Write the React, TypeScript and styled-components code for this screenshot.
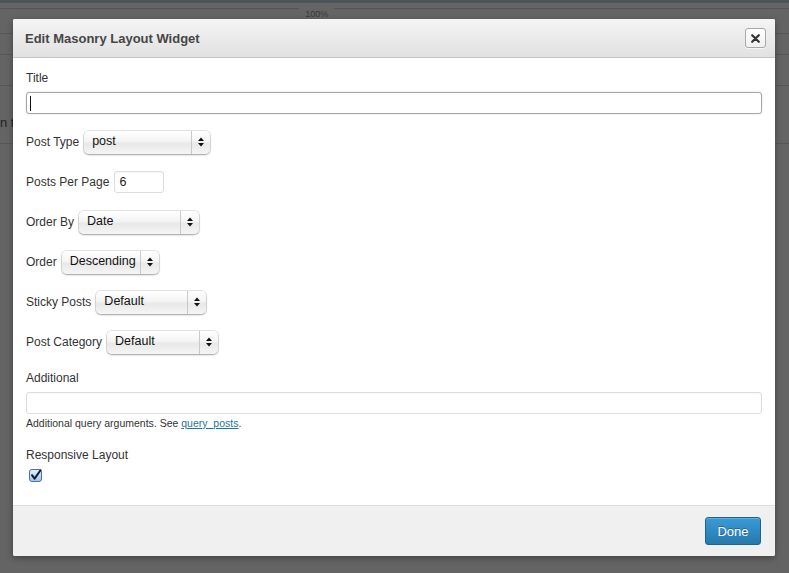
import React from "react";
import styled, { createGlobalStyle } from "styled-components";

const Global = createGlobalStyle`
  html, body { margin: 0; padding: 0; }
  body {
    width: 789px; height: 573px; overflow: hidden;
    background: #646464;
    font-family: "Liberation Sans", Arial, Helvetica, sans-serif;
  }
`;

/* ---------- backdrop (page behind overlay) ---------- */
const Backdrop = styled.div`
  position: relative;
  width: 789px;
  height: 573px;
  background: #646464;
  overflow: hidden;
`;
const TopStrip = styled.div`
  height: 3px;
  background: #4d5458;
`;
const Ruler = styled.div`
  height: 17px;
  display: flex;
  align-items: flex-start;
  gap: 6px;
`;
const RulerLine = styled.div<{ $grow?: number }>`
  flex: ${(p) => p.$grow ?? 1};
  margin-top: 5px;
  border-top: 1px solid #545454;
`;
const RulerLabel = styled.span`
  font-size: 9px;
  line-height: 12px;
  margin-top: 5px;
  color: #3a3a3a;
`;
const BgRow = styled.div<{ $h: number }>`
  height: ${(p) => p.$h}px;
  border-bottom: 1px solid #575757;
  box-sizing: border-box;
  font-size: 13px;
  color: #1f1f1f;
  padding-top: 29px;
  white-space: nowrap;
  &:empty { padding-top: 0; }
`;

/* ---------- modal ---------- */
const Modal = styled.div`
  position: absolute;
  left: 13px;
  top: 19px;
  width: 762px;
  height: 537px;
  background: #fff;
  border-radius: 2px;
  box-shadow: 0 2px 6px rgba(0, 0, 0, 0.35);
  display: flex;
  flex-direction: column;
  overflow: hidden;
`;
const Header = styled.div`
  height: 38px;
  flex: none;
  display: flex;
  align-items: center;
  justify-content: space-between;
  padding: 0 9px 0 12px;
  background: linear-gradient(to bottom, #f4f4f4, #e1e1e1);
  border-bottom: 1px solid #c6c6c6;
`;
const HeaderTitle = styled.h1`
  margin: 0;
  font-size: 13px;
  font-weight: bold;
  color: #464646;
`;
const CloseButton = styled.button`
  width: 21px;
  height: 20px;
  padding: 0;
  border: 1px solid #a9a9a9;
  border-radius: 3px;
  background: linear-gradient(to bottom, #ffffff, #f0f0f0);
  display: flex;
  align-items: center;
  justify-content: center;
  box-shadow: 0 1px 0 rgba(255, 255, 255, 0.6);
`;
const Body = styled.div`
  flex: 1;
  padding: 12px 13px 0 13px;
  display: flex;
  flex-direction: column;
`;
const Label = styled.div<{ $mt?: number }>`
  font-size: 12px;
  line-height: 16px;
  color: #333;
  margin-top: ${(p) => p.$mt ?? 0}px;
`;
const TextInput = styled.div<{ $focus?: boolean; $mt?: number }>`
  height: 22px;
  box-sizing: border-box;
  margin-top: ${(p) => p.$mt ?? 0}px;
  border: 1px solid ${(p) => (p.$focus ? "#a6a6a6" : "#dddddd")};
  border-radius: 3px;
  background: #fff;
  box-shadow: ${(p) => (p.$focus ? "0 0 2px rgba(30,140,190,0.25)" : "inset 0 1px 2px rgba(0,0,0,0.04)")};
  display: flex;
  align-items: center;
  padding-left: 3px;
  font-size: 12.5px;
  color: #222;
`;
const Caret = styled.span`
  width: 1px;
  height: 15px;
  background: #111;
`;
const Row = styled.div<{ $mt: number }>`
  display: flex;
  align-items: center;
  gap: 5px;
  height: 24px;
  margin-top: ${(p) => p.$mt}px;
`;
const SmallInput = styled(TextInput)`
  width: 50px;
  padding-left: 4px;
`;
const Select = styled.div<{ $w: number }>`
  width: ${(p) => p.$w}px;
  height: 23px;
  box-sizing: border-box;
  border-radius: 5px;
  background: linear-gradient(to bottom, #ffffff 0%, #f4f4f4 45%, #e8e8e8 55%, #f5f5f5 100%);
  box-shadow: 0 0 0 1px rgba(0, 0, 0, 0.1), 0 1px 2px rgba(0, 0, 0, 0.3);
  display: flex;
  align-items: stretch;
  font-size: 12.5px;
  color: #111;
`;
const SelectText = styled.span`
  flex: 1;
  display: flex;
  align-items: center;
  padding-left: 8px;
  padding-bottom: 2px;
`;
const SelectArrow = styled.span`
  width: 18px;
  flex: none;
  border-left: 1px solid #c9c9c9;
  display: flex;
  align-items: center;
  justify-content: center;
`;
const Help = styled.div`
  margin-top: 3px;
  font-size: 10.5px;
  line-height: 13px;
  color: #333;
`;
const HelpLink = styled.a`
  color: #21759b;
  text-decoration: underline;
`;
const CheckWrap = styled.div`
  margin-top: 5px;
  margin-left: 3px;
  width: 13px;
  height: 13px;
`;
const Footer = styled.div`
  height: 50px;
  flex: none;
  border-top: 1px solid #dcdcdc;
  background: #f0f0f0;
  display: flex;
  align-items: center;
  justify-content: flex-end;
  padding-right: 14px;
`;
const DoneButton = styled.button`
  width: 56px;
  height: 28px;
  box-sizing: border-box;
  border: 1px solid #1f6491;
  border-radius: 3px;
  background: linear-gradient(to bottom, #3a9bd6, #2679ab);
  color: #fff;
  font-family: "Liberation Sans", Arial, sans-serif;
  font-size: 13px;
  text-shadow: 0 -1px 0 rgba(0, 0, 0, 0.3);
  box-shadow: inset 0 1px 0 rgba(120, 200, 235, 0.5);
  padding: 0;
`;

const Arrows = () => (
  <svg width="6" height="10" viewBox="0 0 6 10">
    <path d="M3 0.5 L6 4 L0 4 Z" fill="#111" />
    <path d="M0 6 L6 6 L3 9.5 Z" fill="#111" />
  </svg>
);

const SelectBox = ({ w, value }: { w: number; value: string }) => (
  <Select $w={w}>
    <SelectText>{value}</SelectText>
    <SelectArrow>
      <Arrows />
    </SelectArrow>
  </Select>
);

const fields: { label: string; w: number; value: string }[] = [
  { label: "Order By", w: 120, value: "Date" },
  { label: "Order", w: 97, value: "Descending" },
  { label: "Sticky Posts", w: 110, value: "Default" },
  { label: "Post Category", w: 111, value: "Default" },
];

export default function App() {
  return (
    <>
      <Global />
      <Backdrop>
        <TopStrip />
        <Ruler>
          <RulerLine />
          <RulerLabel>100%</RulerLabel>
          <RulerLine $grow={1.52} />
        </Ruler>
        <BgRow $h={14} />
        <BgRow $h={21} />
        <BgRow $h={31} />
        <BgRow $h={58}>n t</BgRow>

        <Modal>
          <Header>
            <HeaderTitle>Edit Masonry Layout Widget</HeaderTitle>
            <CloseButton aria-label="close">
              <svg width="9" height="9" viewBox="0 0 9 9">
                <path d="M1.2 1.2 L7.8 7.8 M7.8 1.2 L1.2 7.8" stroke="#333" strokeWidth="2.2" strokeLinecap="round" />
              </svg>
            </CloseButton>
          </Header>
          <Body>
            <Label>Title</Label>
            <TextInput $focus $mt={6}>
              <Caret />
            </TextInput>
            <Row $mt={16}>
              <Label>Post Type</Label>
              <SelectBox w={126} value="post" />
            </Row>
            <Row $mt={16}>
              <Label>Posts Per Page</Label>
              <SmallInput>6</SmallInput>
            </Row>
            {fields.map((f) => (
              <Row $mt={16} key={f.label}>
                <Label>{f.label}</Label>
                <SelectBox w={f.w} value={f.value} />
              </Row>
            ))}
            <Label $mt={16}>Additional</Label>
            <TextInput $mt={6} />
            <Help>
              Additional query arguments. See <HelpLink href="#">query_posts</HelpLink>.
            </Help>
            <Label $mt={17}>Responsive Layout</Label>
            <CheckWrap>
              <svg width="13" height="13" viewBox="0 0 13 13">
                <defs>
                  <linearGradient id="cb" x1="0" y1="0" x2="0" y2="1">
                    <stop offset="0" stopColor="#e4f0fd" />
                    <stop offset="1" stopColor="#9fc4ee" />
                  </linearGradient>
                </defs>
                <rect x="0.5" y="0.5" width="12" height="12" rx="2.5" fill="url(#cb)" stroke="#4f6f9c" />
                <path d="M3 6.2 L5.6 9.6 L11.5 1.2" fill="none" stroke="#111a33" strokeWidth="2" strokeLinecap="round" strokeLinejoin="round" />
              </svg>
            </CheckWrap>
          </Body>
          <Footer>
            <DoneButton>Done</DoneButton>
          </Footer>
        </Modal>
      </Backdrop>
    </>
  );
}
